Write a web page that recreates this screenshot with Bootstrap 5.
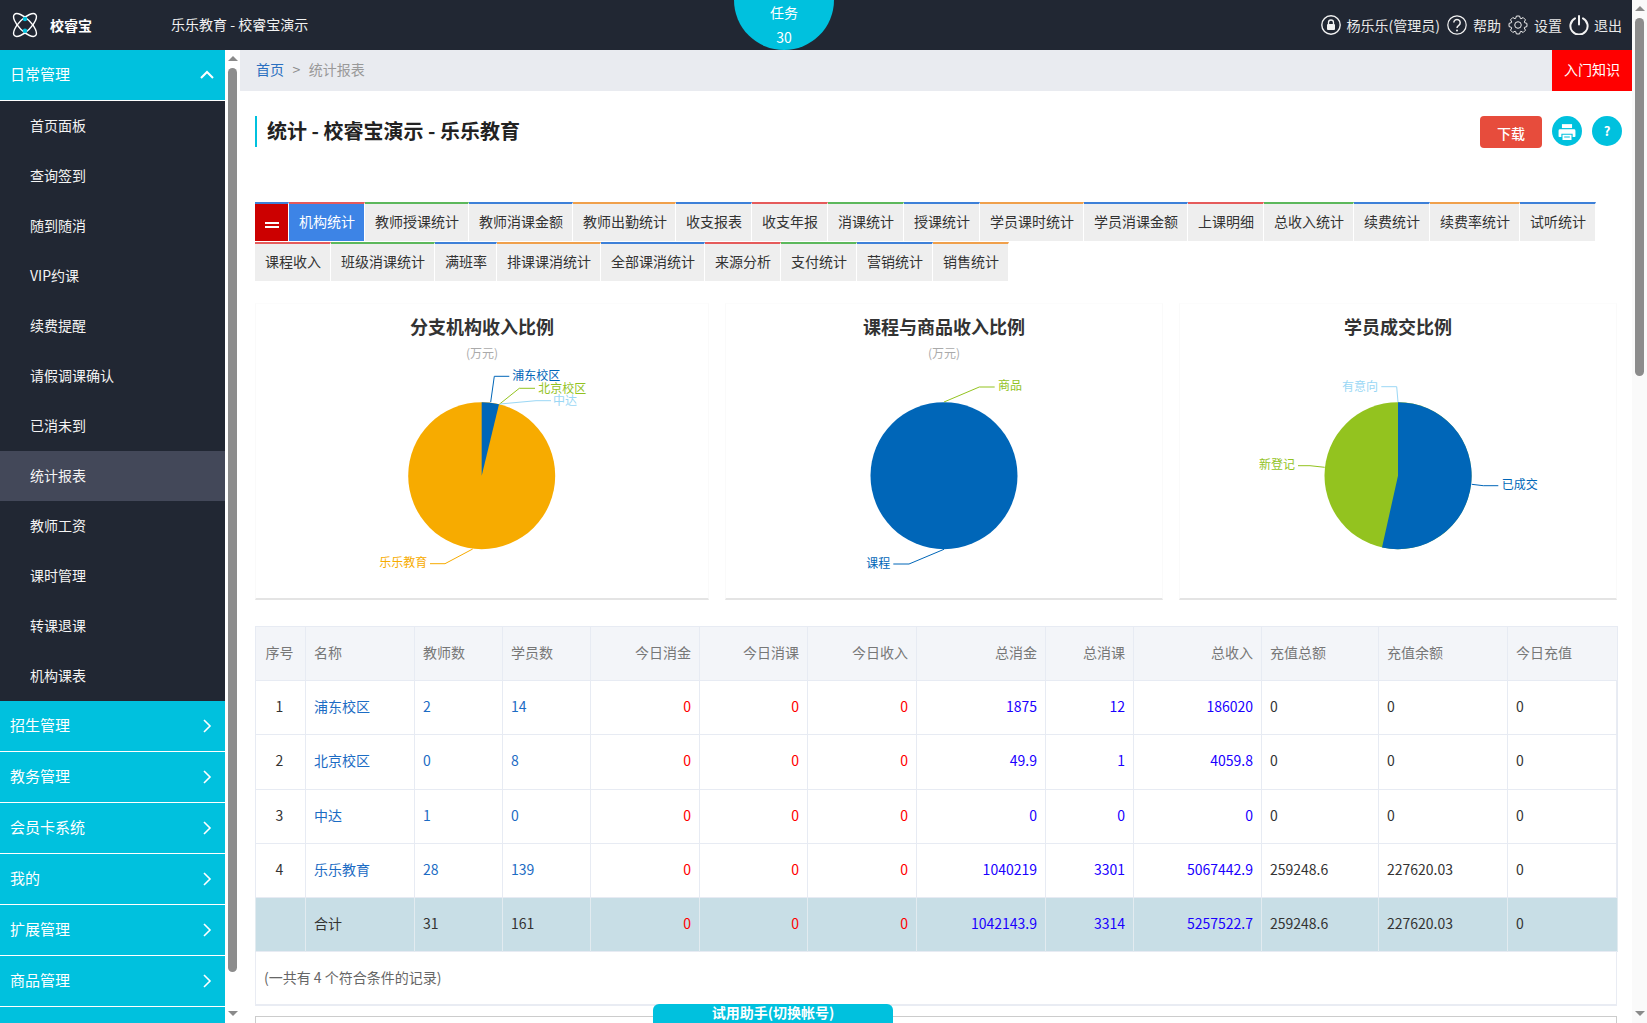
<!DOCTYPE html>
<html lang="zh-CN">
<head>
<meta charset="utf-8">
<title>统计报表</title>
<link href="https://cdn.jsdelivr.net/npm/bootstrap@5.3.0/dist/css/bootstrap.min.css" rel="stylesheet">
<script src="https://cdn.jsdelivr.net/npm/bootstrap@5.3.0/dist/js/bootstrap.bundle.min.js"></script>
<style>
html,body{height:1023px;overflow:hidden;margin:0}
body{font-family:"Noto Sans CJK SC","Noto Sans",sans-serif;font-size:14px;color:#333;background:#fff}
.shell{height:1023px;overflow:hidden;position:relative}
.app-col{width:1632px;height:1023px}
.top-bar{height:50px;background:#212733;color:#eee;position:relative;flex:none}
.logo-ico{width:26px;height:26px;margin-left:12px;flex:none}
.brand-name{margin-left:12px;width:121px;font-weight:700;color:#fff;line-height:50px}
.org-name{color:#f2f2f2;line-height:48px;height:50px}
.task-bubble{position:absolute;left:734px;top:0;width:100px;height:50px;background:#00c1de;color:#fff;border-radius:0 0 50px 50px;text-align:center;line-height:24.5px}
.top-links{margin-left:auto;padding-right:10px;gap:7px;color:#e9e9e9}
.top-link{gap:6px;line-height:48px;height:50px}
.top-link.link-tight{gap:5px}
.top-ico{width:20px;height:20px;flex:none}
.body-row{height:973px;overflow:hidden}
.side-menu{width:225px;flex:none;background:#212733;overflow:hidden}
.side-head{height:51px;background:#00c1de;color:#fff;font-size:15px;padding:0 11px 0 10px;border-bottom:1px solid #fff}
.side-head span{margin-top:-2px}
.side-head svg{width:14px;height:14px}
.side-item{height:50px;line-height:48px;padding-left:30px;color:#f4f4f4}
.side-item.is-on{background:#434859}
.fake-bar{width:15px;flex:none;background:#fff}
.page-bar{background:#fafafa;height:1023px}
.bar-btn{height:16px;flex:none}
.bar-btn-end{height:20px;margin-top:auto}
.tri-up,.tri-down{width:0;height:0;border-left:5px solid transparent;border-right:5px solid transparent}
.tri-up{border-bottom:5px solid #8a8a8a}
.tri-down{border-top:5px solid #8a8a8a}
.bar-thumb{width:9px;margin:2px 3px 0;background:#8c8c8c;border-radius:5px}
.thumb-side{height:904px}
.thumb-page{height:358px}
.main-pane{width:1392px;flex:none;overflow:hidden}
.crumb-bar{height:41px;background:#e9ebf0}
.crumb-bar .breadcrumb{margin:0 0 0 16px;--bs-breadcrumb-divider:'>';--bs-breadcrumb-item-padding-x:8.5px;--bs-breadcrumb-divider-color:#888;--bs-breadcrumb-item-active-color:#999;line-height:39px;height:41px;padding:0}
.crumb-bar a{color:#2a6fc0;text-decoration:none}
.intro-btn{margin-left:auto;width:80px;background:#f00;color:#fff;line-height:39px;height:41px;text-align:center}
.title-row{margin:25px 10px 0 15px;height:32px}
.page-title{margin:0;border-left:2px solid #00c1de;padding-left:10px;font-size:20px;font-weight:700;line-height:29px;color:#222;height:31px}
.dl-btn{margin-left:auto;width:62px;height:32px;background:#e74c3c;border:0;color:#fff;border-radius:4px;font-size:14px;line-height:34px;padding:0;font-weight:500}
.round-btn{width:30px;height:30px;border-radius:50%;background:#00c1de;color:#fff;border:0;padding:0;margin-left:10px;font-weight:700;line-height:30px;font-size:13px}
.round-btn svg{width:18px;height:18px}
.tab-wrap{margin:54px 15px 0;flex-wrap:wrap}
.tab-cell{height:39px;margin-bottom:1px;padding:0 9px 0 10px;border-top:2px solid #3d80d8;border-right:1px solid #fff;background:#eee;color:#333;line-height:34px;white-space:nowrap;text-decoration:none}
.tab-cell.c-red{border-top-color:#e55b5b}
.tab-cell.c-green{border-top-color:#5cb85c}
.tab-cell.c-orange{border-top-color:#f0a04b}
.tab-cell.tab-on{background:#3d84e6;color:#fff}
.tab-cell.tab-trim{padding-right:8px}
.tab-menu{width:34px;padding:0;background:#c00;position:relative}
.tab-menu i{display:block;width:14px;height:2px;background:#fff;margin:0 auto}
.tab-menu i:first-child{margin-top:17.5px;margin-bottom:2px}
.chart-grid{display:grid;grid-template-columns:454px 438px 438px;gap:16px;margin:21px 15px 0}
.chart-card{height:297px;border:1px solid #fafafa;border-top-color:#fcfcfc;border-bottom:2px solid #e4e4e4;padding-top:11px;text-align:center}
.chart-title{font-size:18px;font-weight:700;line-height:24px;color:#333;margin-top:-1px}
.chart-sub{font-size:12px;line-height:15px;height:16px;margin-top:7px;color:#aaa}
.chart-svg{display:block;margin:4px 0 0 -1px;width:454px;height:233px}
.chart-svg.w-sm{width:438px}
.chart-svg text{font-size:12px;dominant-baseline:central;transform:translateY(-1.2px)}
.tbl-box{margin:26px 15px 0;border:1px solid #e9ecf3;border-bottom-width:2px;height:380px}
.stat-tbl{table-layout:fixed;width:1362px;margin:-1px 0 0 -1px;--bs-border-color:#e7ebf3;color:#333}
.stat-tbl tr{height:54.2px}
.stat-tbl th,.stat-tbl td{vertical-align:middle;padding:0 8px 2px;font-weight:400;color:#333}
.stat-tbl tr>:first-child{padding-right:10px}
.stat-tbl th{--bs-table-bg:#f3f5f9;color:#777}
.stat-tbl a{color:#1c6cc4;text-decoration:none}
.stat-tbl td.num-blue{color:#1a00ff}
.stat-tbl td.num-red{color:#f00}
.sum-row td,.sum-row th{--bs-table-bg:#c8dee6;border-color:#e2ebf0}
.tbl-note{padding:13px 0 0 8px;color:#666;line-height:24px}
.next-panel{margin:10px 15px 0;height:80px;border:1px solid #ccc}
.trial-tab{position:absolute;left:653px;top:1004px;width:240px;height:19px;background:#00c1de;color:#fff;border-radius:6px 6px 0 0;text-align:center;font-weight:700;line-height:17px}
</style>
</head>
<body>
<div class="shell d-flex">
  <div class="app-col d-flex flex-column">
    <header class="top-bar d-flex align-items-center">
      <svg class="logo-ico" viewBox="0 0 26 26" fill="none" stroke="#fff" stroke-width="1.4"><ellipse cx="13" cy="13" rx="15" ry="6" transform="rotate(45 13 13)"/><ellipse cx="13" cy="13" rx="15" ry="6" transform="rotate(-45 13 13)"/><circle cx="13" cy="7" r="2.2" fill="#00c1de" stroke="none"/><circle cx="13" cy="18.7" r="2.2" fill="#00c1de" stroke="none"/></svg>
      <div class="brand-name">校睿宝</div>
      <div class="org-name">乐乐教育 - 校睿宝演示</div>
      <div class="task-bubble"><div>任务</div><div>30</div></div>
      <div class="top-links d-flex align-items-center">
        <div class="top-link d-flex align-items-center">
          <svg class="top-ico" viewBox="0 0 20 20"><circle cx="10" cy="10" r="9.2" fill="none" stroke="#f2f2f2" stroke-width="1.4"/><rect x="6" y="9" width="8" height="6" rx="1" fill="#f2f2f2"/><path d="M7.5 9V7.5a2.5 2.5 0 0 1 5 0V9" fill="none" stroke="#f2f2f2" stroke-width="1.3"/></svg>
          <span>杨乐乐(管理员)</span>
        </div>
        <div class="top-link d-flex align-items-center">
          <svg class="top-ico" viewBox="0 0 20 20" fill="none" stroke="#f2f2f2"><circle cx="10" cy="10" r="9.2" stroke-width="1.2"/><path d="M6.8 7.6a3.2 3.2 0 1 1 5 2.7c-1.2.8-1.8 1.3-1.8 2.8" stroke-width="1.5"/><circle cx="10" cy="15.4" r="1" fill="#f2f2f2" stroke="none"/></svg>
          <span>帮助</span>
        </div>
        <div class="top-link d-flex align-items-center">
          <svg class="top-ico" viewBox="-11 -11 22 22" fill="none" stroke="#eee" stroke-width="1.1" stroke-linejoin="round"><polygon points="7.14,-2.6 9.85,-1.74 9.85,1.74 7.14,2.6 6.89,3.21 8.19,5.74 5.74,8.19 3.21,6.89 2.6,7.14 1.74,9.85 -1.74,9.85 -2.6,7.14 -3.21,6.89 -5.74,8.19 -8.19,5.74 -6.89,3.21 -7.14,2.6 -9.85,1.74 -9.85,-1.74 -7.14,-2.6 -6.89,-3.21 -8.19,-5.74 -5.74,-8.19 -3.21,-6.89 -2.6,-7.14 -1.74,-9.85 1.74,-9.85 2.6,-7.14 3.21,-6.89 5.74,-8.19 8.19,-5.74 6.89,-3.21"/><circle r="3.6"/></svg>
          <span>设置</span>
        </div>
        <div class="top-link link-tight d-flex align-items-center">
          <svg class="top-ico" viewBox="0 0 20 20" fill="none" stroke="#f2f2f2" stroke-width="2" stroke-linecap="round"><path d="M6 3.4a8.6 8.6 0 1 0 8 0"/><path d="M10 1v8.5"/></svg>
          <span>退出</span>
        </div>
      </div>
    </header>
    <div class="body-row d-flex">
      <nav class="side-menu">
        <div class="side-head d-flex align-items-center justify-content-between"><span>日常管理</span><svg viewBox="0 0 14 14" fill="none" stroke="#fff" stroke-width="2"><path d="M1 10l6-6 6 6"/></svg></div>
        <div class="side-item">首页面板</div>
        <div class="side-item">查询签到</div>
        <div class="side-item">随到随消</div>
        <div class="side-item">VIP约课</div>
        <div class="side-item">续费提醒</div>
        <div class="side-item">请假调课确认</div>
        <div class="side-item">已消未到</div>
        <div class="side-item is-on">统计报表</div>
        <div class="side-item">教师工资</div>
        <div class="side-item">课时管理</div>
        <div class="side-item">转课退课</div>
        <div class="side-item">机构课表</div>
        <div class="side-head d-flex align-items-center justify-content-between"><span>招生管理</span><svg viewBox="0 0 14 14" fill="none" stroke="#fff" stroke-width="1.6"><path d="M4 1l6 6-6 6"/></svg></div>
        <div class="side-head d-flex align-items-center justify-content-between"><span>教务管理</span><svg viewBox="0 0 14 14" fill="none" stroke="#fff" stroke-width="1.6"><path d="M4 1l6 6-6 6"/></svg></div>
        <div class="side-head d-flex align-items-center justify-content-between"><span>会员卡系统</span><svg viewBox="0 0 14 14" fill="none" stroke="#fff" stroke-width="1.6"><path d="M4 1l6 6-6 6"/></svg></div>
        <div class="side-head d-flex align-items-center justify-content-between"><span>我的</span><svg viewBox="0 0 14 14" fill="none" stroke="#fff" stroke-width="1.6"><path d="M4 1l6 6-6 6"/></svg></div>
        <div class="side-head d-flex align-items-center justify-content-between"><span>扩展管理</span><svg viewBox="0 0 14 14" fill="none" stroke="#fff" stroke-width="1.6"><path d="M4 1l6 6-6 6"/></svg></div>
        <div class="side-head d-flex align-items-center justify-content-between"><span>商品管理</span><svg viewBox="0 0 14 14" fill="none" stroke="#fff" stroke-width="1.6"><path d="M4 1l6 6-6 6"/></svg></div>
        <div class="side-head"></div>
      </nav>
      <div class="fake-bar d-flex flex-column">
        <div class="bar-btn d-flex align-items-center justify-content-center"><div class="tri-up"></div></div>
        <div class="bar-thumb thumb-side"></div>
        <div class="bar-btn bar-btn-end d-flex align-items-center justify-content-center"><div class="tri-down"></div></div>
      </div>
      <main class="main-pane">
        <div class="crumb-bar d-flex">
          <ol class="breadcrumb">
            <li class="breadcrumb-item"><a href="#">首页</a></li>
            <li class="breadcrumb-item active">统计报表</li>
          </ol>
          <div class="intro-btn">入门知识</div>
        </div>
        <div class="title-row d-flex align-items-start">
          <h1 class="page-title">统计 - 校睿宝演示 - 乐乐教育</h1>
          <button class="btn dl-btn">下载</button>
          <button class="btn round-btn"><svg viewBox="0 0 16 16" fill="#fff"><path d="M3.5 1h9v3.5h-9z"/><path d="M1.8 5.5h12.4a1.3 1.3 0 0 1 1.3 1.3v5a.7.7 0 0 1-.7.7h-1.8V9.5H3v3H1.2a.7.7 0 0 1-.7-.7v-5a1.3 1.3 0 0 1 1.3-1.3z"/><path d="M4 10.5h8V15H4zM5.5 12v.9h5V12z" fill-rule="evenodd"/></svg></button>
          <button class="btn round-btn">?</button>
        </div>
        <div class="tab-wrap d-flex">
          <a class="tab-cell tab-menu" href="#"><i></i><i></i></a>
          <a class="tab-cell c-red tab-on" href="#">机构统计</a>
          <a class="tab-cell c-green" href="#">教师授课统计</a>
          <a class="tab-cell" href="#">教师消课金额</a>
          <a class="tab-cell c-orange tab-trim" href="#">教师出勤统计</a>
          <a class="tab-cell" href="#">收支报表</a>
          <a class="tab-cell c-red" href="#">收支年报</a>
          <a class="tab-cell c-green" href="#">消课统计</a>
          <a class="tab-cell" href="#">授课统计</a>
          <a class="tab-cell c-orange" href="#">学员课时统计</a>
          <a class="tab-cell" href="#">学员消课金额</a>
          <a class="tab-cell c-red" href="#">上课明细</a>
          <a class="tab-cell c-green" href="#">总收入统计</a>
          <a class="tab-cell" href="#">续费统计</a>
          <a class="tab-cell c-orange" href="#">续费率统计</a>
          <a class="tab-cell" href="#">试听统计</a>
          <a class="tab-cell c-red" href="#">课程收入</a>
          <a class="tab-cell c-green" href="#">班级消课统计</a>
          <a class="tab-cell" href="#">满班率</a>
          <a class="tab-cell c-orange" href="#">排课课消统计</a>
          <a class="tab-cell" href="#">全部课消统计</a>
          <a class="tab-cell c-red" href="#">来源分析</a>
          <a class="tab-cell c-green" href="#">支付统计</a>
          <a class="tab-cell" href="#">营销统计</a>
          <a class="tab-cell c-orange" href="#">销售统计</a>
        </div>
        <div class="chart-grid">
          <section class="chart-card">
            <div class="chart-title">分支机构收入比例</div>
            <div class="chart-sub">(万元)</div>
            <svg class="chart-svg" viewBox="0 0 454 233">
              <circle cx="226.7" cy="110.7" r="73.5" fill="#f7ab00"/>
              <path d="M226.7 110.7V37.2A73.5 73.5 0 0 1 244 39.3z" fill="#0066b8"/>
              <g fill="none" stroke-width="1">
                <path d="M235.7 37L239.3 11.3H254.3" stroke="#0066b8"/>
                <path d="M244.3 39.3L264.3 23.3H280" stroke="#93c31f"/>
                <path d="M245 39L281 35.7H296" stroke="#9ad7f5"/>
                <path d="M217.7 184L190 198.7H175" stroke="#f7ab00"/>
              </g>
              <text x="257.3" y="11" fill="#0066b8">浦东校区</text>
              <text x="283.3" y="24" fill="#93c31f">北京校区</text>
              <text x="298" y="36" fill="#9ad7f5">中达</text>
              <text x="172.3" y="197.7" fill="#f7ab00" text-anchor="end">乐乐教育</text>
            </svg>
          </section>
          <section class="chart-card">
            <div class="chart-title">课程与商品收入比例</div>
            <div class="chart-sub">(万元)</div>
            <svg class="chart-svg w-sm" viewBox="0 0 438 233">
              <circle cx="219" cy="110.7" r="73.5" fill="#0066b8"/>
              <g fill="none" stroke-width="1">
                <path d="M219 37L254.3 22H269.7" stroke="#93c31f"/>
                <path d="M219 184.3L184 199H168.3" stroke="#0066b8"/>
              </g>
              <text x="273" y="20.7" fill="#93c31f">商品</text>
              <text x="165.3" y="198.7" fill="#0066b8" text-anchor="end">课程</text>
            </svg>
          </section>
          <section class="chart-card">
            <div class="chart-title">学员成交比例</div>
            <div class="chart-sub"></div>
            <svg class="chart-svg w-sm" viewBox="0 0 438 233">
              <circle cx="219" cy="110.7" r="73.5" fill="#93c31f"/>
              <path d="M219 110.7V37.2A73.5 73.5 0 1 1 203 182.4z" fill="#0066b8"/>
              <g fill="none" stroke-width="1">
                <path d="M219 37L217.7 21.7H202.3" stroke="#9ad7f5"/>
                <path d="M145.7 102.3L131 100.7H119" stroke="#93c31f"/>
                <path d="M292.7 119.3L304.3 120.7H319.3" stroke="#0066b8"/>
              </g>
              <text x="199" y="21.7" fill="#9ad7f5" text-anchor="end">有意向</text>
              <text x="116" y="99.3" fill="#93c31f" text-anchor="end">新登记</text>
              <text x="322.7" y="120" fill="#0066b8">已成交</text>
            </svg>
          </section>
        </div>
        <div class="tbl-box">
          <table class="table table-bordered stat-tbl">
            <colgroup><col width="50"><col width="109"><col width="88"><col width="88"><col width="109"><col width="108"><col width="109"><col width="129"><col width="88"><col width="128"><col width="117"><col width="129"><col width="110"></colgroup>
            <thead><tr><th class="text-center">序号</th><th>名称</th><th>教师数</th><th>学员数</th><th class="text-end">今日消金</th><th class="text-end">今日消课</th><th class="text-end">今日收入</th><th class="text-end">总消金</th><th class="text-end">总消课</th><th class="text-end">总收入</th><th>充值总额</th><th>充值余额</th><th>今日充值</th></tr></thead>
            <tbody>
              <tr><td class="text-center">1</td><td><a href="#">浦东校区</a></td><td><a href="#">2</a></td><td><a href="#">14</a></td><td class="text-end num-red">0</td><td class="text-end num-red">0</td><td class="text-end num-red">0</td><td class="text-end num-blue">1875</td><td class="text-end num-blue">12</td><td class="text-end num-blue">186020</td><td>0</td><td>0</td><td>0</td></tr>
              <tr><td class="text-center">2</td><td><a href="#">北京校区</a></td><td><a href="#">0</a></td><td><a href="#">8</a></td><td class="text-end num-red">0</td><td class="text-end num-red">0</td><td class="text-end num-red">0</td><td class="text-end num-blue">49.9</td><td class="text-end num-blue">1</td><td class="text-end num-blue">4059.8</td><td>0</td><td>0</td><td>0</td></tr>
              <tr><td class="text-center">3</td><td><a href="#">中达</a></td><td><a href="#">1</a></td><td><a href="#">0</a></td><td class="text-end num-red">0</td><td class="text-end num-red">0</td><td class="text-end num-red">0</td><td class="text-end num-blue">0</td><td class="text-end num-blue">0</td><td class="text-end num-blue">0</td><td>0</td><td>0</td><td>0</td></tr>
              <tr><td class="text-center">4</td><td><a href="#">乐乐教育</a></td><td><a href="#">28</a></td><td><a href="#">139</a></td><td class="text-end num-red">0</td><td class="text-end num-red">0</td><td class="text-end num-red">0</td><td class="text-end num-blue">1040219</td><td class="text-end num-blue">3301</td><td class="text-end num-blue">5067442.9</td><td>259248.6</td><td>227620.03</td><td>0</td></tr>
              <tr class="sum-row"><td></td><td>合计</td><td>31</td><td>161</td><td class="text-end num-red">0</td><td class="text-end num-red">0</td><td class="text-end num-red">0</td><td class="text-end num-blue">1042143.9</td><td class="text-end num-blue">3314</td><td class="text-end num-blue">5257522.7</td><td>259248.6</td><td>227620.03</td><td>0</td></tr>
            </tbody>
          </table>
          <div class="tbl-note">(一共有 4 个符合条件的记录)</div>
        </div>
        <div class="next-panel"></div>
      </main>
    </div>
  </div>
  <div class="fake-bar page-bar d-flex flex-column">
    <div class="bar-btn d-flex align-items-center justify-content-center"><div class="tri-up"></div></div>
    <div class="bar-thumb thumb-page"></div>
    <div class="bar-btn bar-btn-end d-flex align-items-center justify-content-center"><div class="tri-down"></div></div>
  </div>
  <div class="trial-tab">试用助手(切换帐号)</div>
</div>
</body>
</html>
